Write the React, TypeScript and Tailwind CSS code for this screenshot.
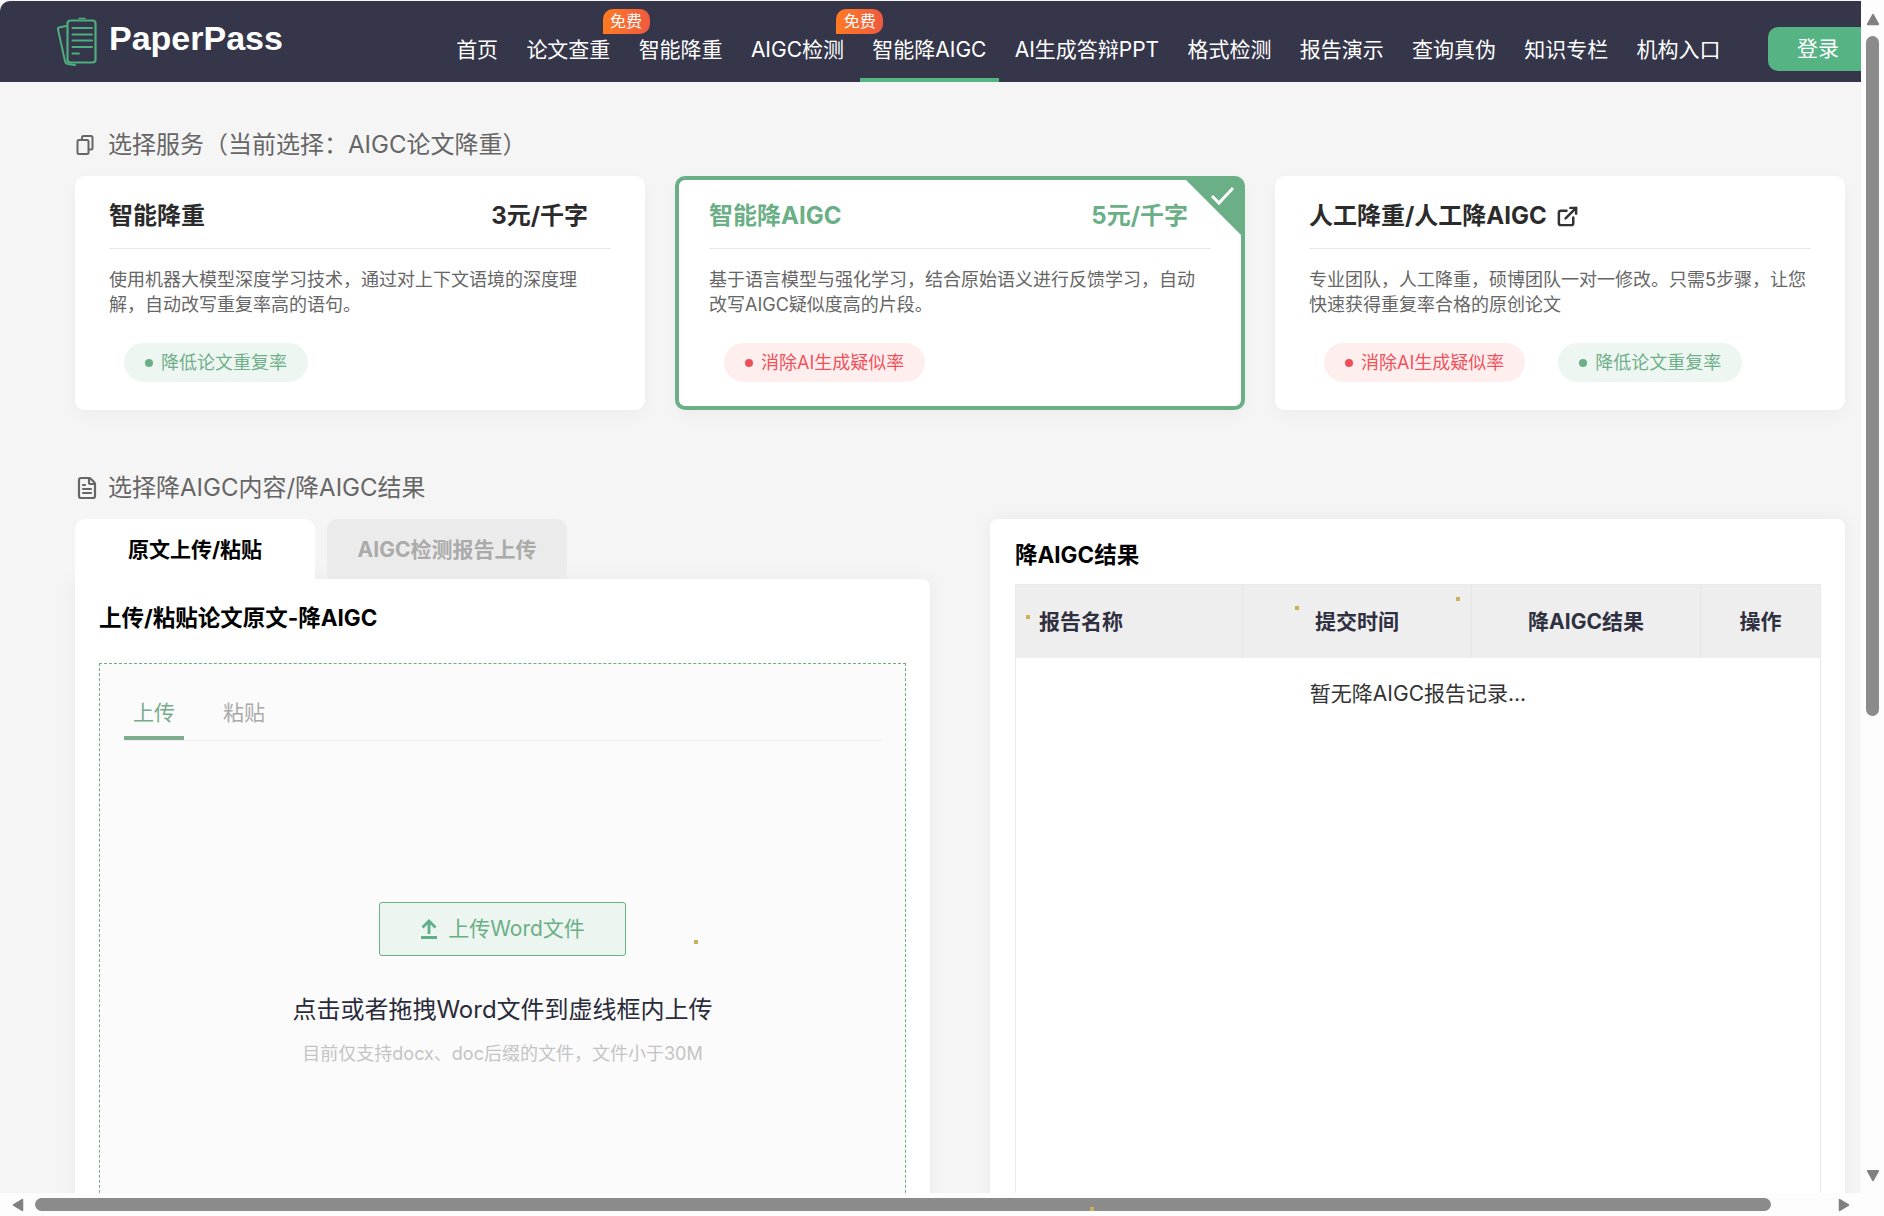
import { ExternalLink, FileText } from "lucide-react";

const navItems = [
  { label: "首页" },
  { label: "论文查重", free: true },
  { label: "智能降重" },
  { label: "AIGC检测", free: true },
  { label: "智能降AIGC", active: true },
  { label: "AI生成答辩PPT" },
  { label: "格式检测" },
  { label: "报告演示" },
  { label: "查询真伪" },
  { label: "知识专栏" },
  { label: "机构入口" },
];

function Logo() {
  return (
    <svg viewBox="0 0 40 50" className="h-[50px] w-[40px] shrink-0" fill="none" stroke="#4fae7e" strokeLinecap="round" strokeLinejoin="round">
      <path d="M9 9 L2 10.5 Q0.5 11 1 12.5 L8 44 Q8.5 46.5 11 47 L18 48" strokeWidth="2" />
      <rect x="10.5" y="3.5" width="28" height="42" rx="3" strokeWidth="2.2" />
      <path d="M22 1.5 H28" strokeWidth="1.6" />
      <path d="M15.5 11 H35 M15.5 17.5 H35 M15.5 23.5 H35 M15.5 30 H35 M15.5 36.5 H22" strokeWidth="2" />
    </svg>
  );
}

function Tag({ red, children }: { red?: boolean; children: string }) {
  return (
    <div className={`flex h-[39px] items-center gap-[8px] rounded-full pl-[21px] pr-[21px] text-[18px] ${red ? "bg-[#ffeeee] text-[#f0525c]" : "bg-[#eef6f1] text-[#6fb08a]"}`}>
      <span className={`h-[8px] w-[8px] rounded-full ${red ? "bg-[#ee4f58]" : "bg-[#6aaf85]"}`} />
      {children}
    </div>
  );
}

function ServiceCard({
  title,
  price,
  desc,
  selected,
  link,
  tags,
}: {
  title: string;
  price?: string;
  desc: string;
  selected?: boolean;
  link?: boolean;
  tags: { red?: boolean; text: string }[];
}) {
  return (
    <div className={`relative h-[234px] rounded-[10px] border-4 bg-white px-[30px] shadow-[0_6px_18px_rgba(0,0,0,0.035)] ${selected ? "border-[#6aaf85]" : "border-transparent"}`}>
      {selected ? (
        <svg viewBox="0 0 55 55" className="absolute right-0 top-0 h-[55px] w-[55px]">
          <polygon points="0,0 55,0 55,55" fill="#6aaf85" />
          <path d="M26 16 L33 23 L47 8" fill="none" stroke="#fff" strokeWidth="3" />
        </svg>
      ) : null}
      <div className={`flex h-[69px] items-center justify-between border-b border-[#e8e8f0] pr-[23px] pt-[4px] text-[24px] font-bold leading-[32px] ${selected ? "text-[#6aaf85]" : "text-[#2b2b2b]"}`}>
        <div className="flex items-center gap-[9px]">
          {title}
          {link ? <ExternalLink size={23} strokeWidth={2.6} className="text-[#333]" /> : null}
        </div>
        {price ? <div>{price}</div> : null}
      </div>
      <div className="mt-[18px] h-[51px] text-[18px] leading-[25px] text-[#666]">{desc}</div>
      <div className="ml-[15px] mt-[25px] flex gap-[33px]">
        {tags.map((t) => (
          <Tag key={t.text} red={t.red}>
            {t.text}
          </Tag>
        ))}
      </div>
    </div>
  );
}

function Speck({ className }: { className: string }) {
  return <span className={`absolute h-[4px] w-[4px] bg-[#c9b05a] ${className}`} />;
}

function Arrow({ points }: { points: string }) {
  return (
    <svg viewBox="0 0 16 16" className="h-[14px] w-[14px] shrink-0">
      <polygon points={points} fill="#808080" stroke="#808080" strokeWidth="2" strokeLinejoin="round" />
    </svg>
  );
}

export default function App() {
  return (
    <div className="flex h-[1216px] w-[1884px] flex-col overflow-hidden bg-white font-['Inter','Noto_Sans_CJK_SC',sans-serif]">
      <div className="flex min-h-0 flex-1">
        <div className="w-[1861px] shrink-0 overflow-hidden bg-[#f5f5f5]">
          <div className="mt-px flex h-[81px] overflow-hidden rounded-tl-[10px] bg-[#35364a] text-white">
            <div className="flex w-[442px] shrink-0 items-center gap-[12px] pl-[57px]">
              <Logo />
              <div className="mb-[8px] font-['Liberation_Sans',sans-serif] text-[34px] font-bold leading-[40px]">PaperPass</div>
            </div>
            <div className="flex shrink-0">
              {navItems.map((n) => (
                <div key={n.label} className="relative flex items-center whitespace-nowrap px-[14.125px] pb-[4px] pt-[20px] text-[21px] leading-[30px]">
                  {n.label}
                  {n.active ? <span className="absolute bottom-0 left-[2px] right-[2px] h-[4px] bg-[#56b384]" /> : null}
                  {n.free ? (
                    <span className="absolute left-[calc(100%-22px)] top-[8px] flex h-[25px] w-[47px] items-center justify-center rounded-[10px] rounded-bl-none bg-gradient-to-r from-[#ff7a1f] to-[#ee5a3f] text-[16px] leading-[25px]">
                      免费
                    </span>
                  ) : null}
                </div>
              ))}
            </div>
            <div className="ml-[33px] mt-[26px] flex h-[44px] w-[101px] shrink-0 items-center justify-center rounded-[10px] bg-[#56b384] text-[21px]">登录</div>
          </div>

          <div className="pl-[75px]">
            <div className="mt-[48px] flex h-[30px] items-center gap-[13px] text-[24px] leading-[30px] text-[#666]">
              <svg viewBox="0 0 20 20" className="h-[20px] w-[20px] shrink-0" fill="none" stroke="#666" strokeWidth="2">
                <path d="M7 4 V2.5 Q7 1 8.5 1 H16 Q17.5 1 17.5 2.5 V13 Q17.5 14.5 16 14.5 H14" />
                <rect x="2.5" y="5" width="11" height="14" rx="1.5" />
              </svg>
              <span>选择服务（当前选择：AIGC论文降重）</span>
            </div>

            <div className="mt-[16px] grid w-[1770px] grid-cols-3 gap-[30px]">
              <ServiceCard
                title="智能降重"
                price="3元/千字"
                desc="使用机器大模型深度学习技术，通过对上下文语境的深度理解，自动改写重复率高的语句。"
                tags={[{ text: "降低论文重复率" }]}
              />
              <ServiceCard
                selected
                title="智能降AIGC"
                price="5元/千字"
                desc="基于语言模型与强化学习，结合原始语义进行反馈学习，自动改写AIGC疑似度高的片段。"
                tags={[{ red: true, text: "消除AI生成疑似率" }]}
              />
              <ServiceCard
                link
                title="人工降重/人工降AIGC"
                desc="专业团队，人工降重，硕博团队一对一修改。只需5步骤，让您快速获得重复率合格的原创论文"
                tags={[{ red: true, text: "消除AI生成疑似率" }, { text: "降低论文重复率" }]}
              />
            </div>

            <div className="mt-[63px] flex h-[30px] items-center gap-[9px] text-[24px] leading-[30px] text-[#666]">
              <FileText size={24} strokeWidth={2.2} className="shrink-0 text-[#666]" />
              <span>选择降AIGC内容/降AIGC结果</span>
            </div>

            <div className="mt-[16px] grid w-[1770px] grid-cols-2 gap-[60px]">
              <div>
                <div className="flex h-[60px] gap-[12px] pt-0 text-[21px] font-bold leading-[30px]">
                  <div className="flex w-[240px] items-center justify-center rounded-t-[10px] bg-white pt-[2px] text-black">原文上传/粘贴</div>
                  <div className="flex w-[240px] items-center justify-center rounded-t-[10px] bg-[#ebebeb] pt-[2px] text-[#aaa]">AIGC检测报告上传</div>
                </div>
                <div className="h-[700px] rounded-tr-[8px] bg-white px-[24px] pt-[24px] shadow-[0_0_20px_rgba(0,0,0,0.05)]">
                  <div className="h-[30px] text-[22.5px] font-bold leading-[30px] text-black">上传/粘贴论文原文-降AIGC</div>
                  <div className="relative mt-[30px] h-[560px] border border-dashed border-[#6aaf85] bg-[#fbfbfb] px-[24px] pt-[34px]">
                    <div className="flex gap-[30px] border-b border-[#eeeeee] text-center text-[21px] leading-[30px]">
                      <div className="w-[60px] border-b-4 border-[#7fae8f] pb-[8px] text-[#78ab8a]">上传</div>
                      <div className="w-[60px] pb-[12px] text-[#aaa]">粘贴</div>
                    </div>
                    <div className="mx-auto mt-[161px] flex h-[54px] w-[247px] items-center justify-center gap-[10px] rounded-[3px] border border-[#6aaf85] bg-[#edf5f1] text-[21px] text-[#6aaf85]">
                      <svg viewBox="0 0 18 20" className="h-[20px] w-[18px] shrink-0" fill="none" stroke="#5fb088" strokeWidth="2.8">
                        <path d="M9 15 V2.5 M2.5 8.5 L9 2 L15.5 8.5" />
                        <path d="M1 18.5 H17" strokeWidth="3" />
                      </svg>
                      上传Word文件
                    </div>
                    <Speck className="left-[594px] top-[276px]" />
                    <div className="mt-[37px] text-center text-[24px] leading-[34px] text-[#2a2b3a]">点击或者拖拽Word文件到虚线框内上传</div>
                    <div className="mt-[13px] text-center text-[18px] leading-[28px] text-[#c4c4c4]">目前仅支持docx、doc后缀的文件，文件小于30M</div>
                  </div>
                </div>
              </div>

              <div className="h-[760px] rounded-t-[8px] bg-white pl-[25px] pr-[24px] pt-[21px] shadow-[0_0_20px_rgba(0,0,0,0.05)]">
                <div className="h-[30px] text-[22.5px] font-bold leading-[30px] text-black">降AIGC结果</div>
                <div className="relative mt-[14px] h-[640px] border border-[#e8e8ee]">
                  <div className="grid h-[73px] grid-cols-[227px_229px_229px_1fr] bg-[#eeeeef] text-center text-[21px] font-bold leading-[30px] text-[#2f3040]">
                    <div className="flex items-center border-r border-[#e6e6ea] pl-[23px]">报告名称</div>
                    <div className="flex items-center justify-center border-r border-[#e6e6ea]">提交时间</div>
                    <div className="flex items-center justify-center border-r border-[#e6e6ea]">降AIGC结果</div>
                    <div className="flex items-center justify-center">操作</div>
                  </div>
                  <div className="flex h-[72px] items-center justify-center text-[21px] leading-[30px] text-[#333]">暂无降AIGC报告记录...</div>
                  <Speck className="left-[10px] top-[30px]" />
                  <Speck className="left-[279px] top-[21px]" />
                  <Speck className="left-[440px] top-[12px]" />
                </div>
              </div>
            </div>
          </div>
        </div>

        <div className="flex w-[23px] shrink-0 flex-col items-center bg-[#fdfdfd] pt-[12px]">
          <Arrow points="8,3 14,14 2,14" />
          <div className="mt-[10px] h-[680px] w-[13px] rounded-full bg-[#8b8b8b]" />
          <div className="mb-[10px] mt-auto">
            <Arrow points="2,2 14,2 8,13" />
          </div>
        </div>
      </div>

      <div className="flex h-[23px] shrink-0 items-center bg-[#fdfdfd] pl-[11px]">
        <Arrow points="13,2 13,14 3,8" />
        <div className="relative ml-[10px] h-[13px] w-[1736px] rounded-full bg-[#8b8b8b]">
          <Speck className="left-[1055px] top-[9px] h-[2px] w-[2px]" />
        </div>
        <div className="ml-[66px]">
          <Arrow points="3,2 3,14 13,8" />
        </div>
      </div>
    </div>
  );
}
